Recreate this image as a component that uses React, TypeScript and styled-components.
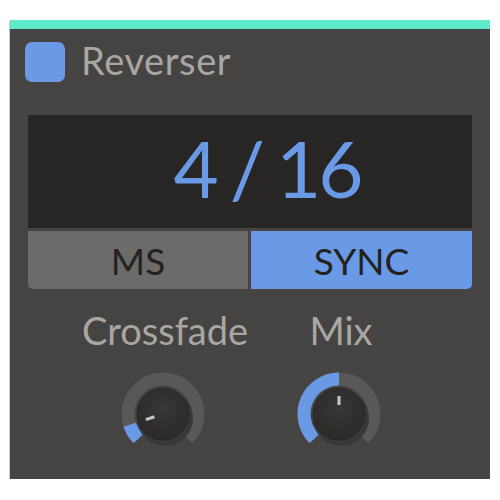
import React from 'react';
import styled, { createGlobalStyle } from 'styled-components';

const GlobalStyle = createGlobalStyle`
  body {
    margin: 0;
    background: #ffffff;
    font-family: Lato, 'Open Sans', sans-serif;
  }
`;

const BLUE = '#6a9ae6';

const StyledPanel = styled.div`
  box-sizing: border-box;
  width: 480px;
  height: 459px;
  margin: 20px 10px 0;
  background: #464442;
  border-top: 9px solid #5de9ca;
  box-shadow: -1px 1px 0 #c9c8c6;
  display: flex;
  flex-direction: column;
`;

const StyledHeader = styled.div`
  display: flex;
  align-items: center;
  gap: 16px;
  padding: 13px 0 0 15px;
  height: 40px;
`;

const StyledCheck = styled.div`
  width: 40px;
  height: 40px;
  border-radius: 7px;
  background: ${BLUE};
`;

const StyledTitle = styled.span`
  font-size: 38px;
  letter-spacing: 0.6px;
  color: #a9a7a4;
  line-height: 1;
  margin-top: -5px;
`;

const StyledDisplay = styled.div`
  margin: 33px 18px 0;
  height: 113px;
  background: #282625;
  display: flex;
  align-items: center;
  justify-content: center;
  font-size: 78px;
  letter-spacing: -3px;
  word-spacing: -3px;
  color: ${BLUE};
  line-height: 1;
  padding: 0 0 7px 34px;
  box-sizing: border-box;
`;

const StyledModes = styled.div`
  display: grid;
  grid-template-columns: 220px 1fr;
  gap: 3px;
  margin: 3px 18px 0;
  height: 58px;
`;

interface IModeButton {
  $active: boolean;
}

const StyledModeButton = styled.div<IModeButton>`
  display: flex;
  align-items: center;
  justify-content: center;
  background: ${(props) => (props.$active ? BLUE : '#6d6b69')};
  border-radius: ${(props) => (props.$active ? '0 0 5px 0' : '0 0 0 5px')};
  color: #232221;
  font-size: 37px;
  line-height: 1;
`;

const StyledKnobs = styled.div`
  display: flex;
  padding: 22px 0 0 65px;
`;

const StyledKnobColumn = styled.div`
  width: 176px;
  display: flex;
  flex-direction: column;
  align-items: center;
`;

const StyledLabel = styled.div`
  font-size: 38px;
  color: #a9a7a4;
  line-height: 1;
  margin-left: 4px;
`;

const StyledKnobSvg = styled.svg`
  display: block;
  margin-top: 20px;
`;

const polar = (cx: number, cy: number, r: number, deg: number) => {
  const a = (deg * Math.PI) / 180;
  return [cx + r * Math.sin(a), cy - r * Math.cos(a)];
};

const arc = (cx: number, cy: number, r: number, from: number, to: number) => {
  const [x1, y1] = polar(cx, cy, r, from);
  const [x2, y2] = polar(cx, cy, r, to);
  const large = to - from > 180 ? 1 : 0;
  return `M ${x1} ${y1} A ${r} ${r} 0 ${large} 1 ${x2} ${y2}`;
};

const Knob = ({ value, id }: { value: number; id: string }) => {
  const cx = 45;
  const cy = 45;
  const angle = -135 + 270 * value;
  const [ix1, iy1] = polar(cx, cy, 9, angle);
  const [ix2, iy2] = polar(cx, cy, 18, angle);
  return (
    <StyledKnobSvg width={90} height={90} viewBox="0 0 90 90">
      <defs>
        <radialGradient id={id} cx="50%" cy="40%" r="60%">
          <stop offset="0%" stopColor="#393736" />
          <stop offset="100%" stopColor="#2b2a29" />
        </radialGradient>
      </defs>
      <path d={arc(cx, cy, 35, -135, 135)} stroke="#5a5856" strokeWidth={13} fill="none" />
      <path d={arc(cx, cy, 35, -135, angle)} stroke={BLUE} strokeWidth={13} fill="none" />
      <circle cx={cx + 2} cy={cy + 4} r={28} fill="#3a3837" />
      <circle cx={cx} cy={cy} r={26} fill={`url(#${id})`} stroke="#2a2928" strokeWidth={1} />
      <line x1={ix1} y1={iy1} x2={ix2} y2={iy2} stroke="#c9c7c4" strokeWidth={3} />
    </StyledKnobSvg>
  );
};

export default function App() {
  return (
    <>
      <GlobalStyle />
      <StyledPanel>
        <StyledHeader>
          <StyledCheck />
          <StyledTitle>Reverser</StyledTitle>
        </StyledHeader>
        <StyledDisplay>4 / 16</StyledDisplay>
        <StyledModes>
          <StyledModeButton $active={false}>MS</StyledModeButton>
          <StyledModeButton $active>SYNC</StyledModeButton>
        </StyledModes>
        <StyledKnobs>
          <StyledKnobColumn>
            <StyledLabel>Crossfade</StyledLabel>
            <Knob value={0.1} id="k1" />
          </StyledKnobColumn>
          <StyledKnobColumn>
            <StyledLabel>Mix</StyledLabel>
            <Knob value={0.5} id="k2" />
          </StyledKnobColumn>
        </StyledKnobs>
      </StyledPanel>
    </>
  );
}
